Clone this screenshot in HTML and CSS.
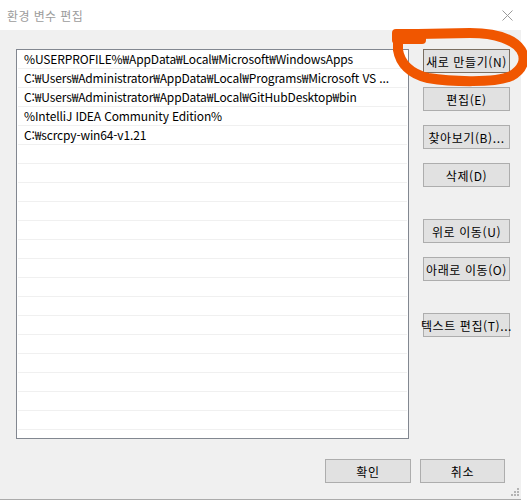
FILE: index.html
```html
<!DOCTYPE html>
<html lang="ko">
<head>
<meta charset="utf-8">
<title>환경 변수 편집</title>
<link rel="stylesheet" href="styles.css">
</head>
<body>
<div class="window">
  <div class="titlebar">
    <span class="title">환경 변수 편집</span>
    <svg class="close" width="11" height="11" viewBox="0 0 11 11"><path d="M0.5 0.5 L10.5 10.5 M10.5 0.5 L0.5 10.5" stroke="#9a9a9a" stroke-width="1" fill="none"/></svg>
  </div>
  <div class="body">
    <div class="main">
      <div class="list">
        <div class="row">%USERPROFILE%₩AppData₩Local₩Microsoft₩WindowsApps</div>
        <div class="row">C:₩Users₩Administrator₩AppData₩Local₩Programs₩Microsoft VS ...</div>
        <div class="row">C:₩Users₩Administrator₩AppData₩Local₩GitHubDesktop₩bin</div>
        <div class="row">%IntelliJ IDEA Community Edition%</div>
        <div class="row">C:₩scrcpy-win64-v1.21</div>
        <div class="row"></div><div class="row"></div><div class="row"></div><div class="row"></div><div class="row"></div>
        <div class="row"></div><div class="row"></div><div class="row"></div><div class="row"></div><div class="row"></div>
        <div class="row"></div><div class="row"></div><div class="row"></div><div class="row"></div><div class="row"></div>
        <div class="row"></div>
      </div>
      <div class="side">
        <div class="btn btn-default">새로 만들기(N)</div>
        <div class="btn">편집(E)</div>
        <div class="btn">찾아보기(B)...</div>
        <div class="btn">삭제(D)</div>
        <div class="btn group">위로 이동(U)</div>
        <div class="btn">아래로 이동(O)</div>
        <div class="btn group">텍스트 편집(T)...</div>
      </div>
    </div>
    <div class="footer">
      <div class="btn ok">확인</div>
      <div class="btn cancel">취소</div>
    </div>
    <svg class="grip" width="9" height="9" viewBox="0 0 9 9">
      <g fill="#b4b4b4">
        <rect x="6" y="0" width="2" height="2"/>
        <rect x="3" y="3" width="2" height="2"/><rect x="6" y="3" width="2" height="2"/>
        <rect x="0" y="6" width="2" height="2"/><rect x="3" y="6" width="2" height="2"/><rect x="6" y="6" width="2" height="2"/>
      </g>
    </svg>
  </div>
</div>
<svg class="scribble" width="527" height="501" viewBox="0 0 527 501">
  <path d="M398 42 C397 35, 405 34, 418 34 L470 33 C497 33, 514 40, 521 50 C527 60, 522 70, 511 76 C496 83, 452 82, 428 78 C410 74, 400 63, 398 50 Z" fill="none" stroke="#f05600" stroke-width="10" stroke-linecap="round" stroke-linejoin="round"/>
  <rect x="392" y="29" width="34" height="15" rx="4" fill="#f05600"/>
</svg>
</body>
</html>
```
FILE: styles.css
```css
html, body {
  margin: 0;
  padding: 0;
  background: #ffffff;
}
body {
  width: 527px;
  height: 501px;
  overflow: hidden;
  font-family: "Noto Sans CJK KR", "Noto Sans", sans-serif;
  font-size: 12px;
  color: #000;
}
.window {
  width: 521px;
  height: 500px;
  box-sizing: border-box;
  border-bottom: 1px solid #ababab;
  display: flex;
  flex-direction: column;
}
.titlebar {
  height: 30px;
  flex: none;
  background: #ffffff;
  display: flex;
  align-items: center;
  padding-left: 7px;
  padding-right: 8px;
}
.title {
  color: #9c9c9c;
  font-size: 12px;
  letter-spacing: 0.4px;
}
.close {
  margin-left: auto;
  margin-top: 1px;
}
.body {
  flex: 1;
  background: #f0f0f0;
  padding: 19px 11px 0 16px;
  position: relative;
}
.main {
  display: flex;
  gap: 14px;
}
.list {
  width: 393px;
  height: 390px;
  flex: none;
  box-sizing: border-box;
  border: 1px solid #828790;
  background: #ffffff;
  overflow: hidden;
}
.row {
  height: 18px;
  line-height: 18px;
  margin: 0 1px;
  padding-left: 6px;
  border-bottom: 1px solid #f0f0f0;
  white-space: nowrap;
  overflow: hidden;
  letter-spacing: -0.14px;
}
.side {
  width: 87px;
  flex: none;
  display: flex;
  flex-direction: column;
  gap: 14px;
}
.btn {
  height: 24px;
  box-sizing: border-box;
  border: 1px solid #adadad;
  background: #e1e1e1;
  display: flex;
  align-items: center;
  justify-content: center;
  white-space: nowrap;
  font-size: 12px;
  letter-spacing: 0.6px;
}
.btn-default {
  border-color: #7a6f62;
}
.group {
  margin-top: 18px;
}
.footer {
  display: flex;
  justify-content: flex-end;
  gap: 9px;
  margin-top: 20px;
  padding-right: 5px;
}
.ok {
  width: 86px;
}
.cancel {
  width: 85px;
}
.grip {
  position: absolute;
  right: 1px;
  bottom: 2px;
}
.scribble {
  position: absolute;
  left: 0;
  top: 0;
  pointer-events: none;
}
```
